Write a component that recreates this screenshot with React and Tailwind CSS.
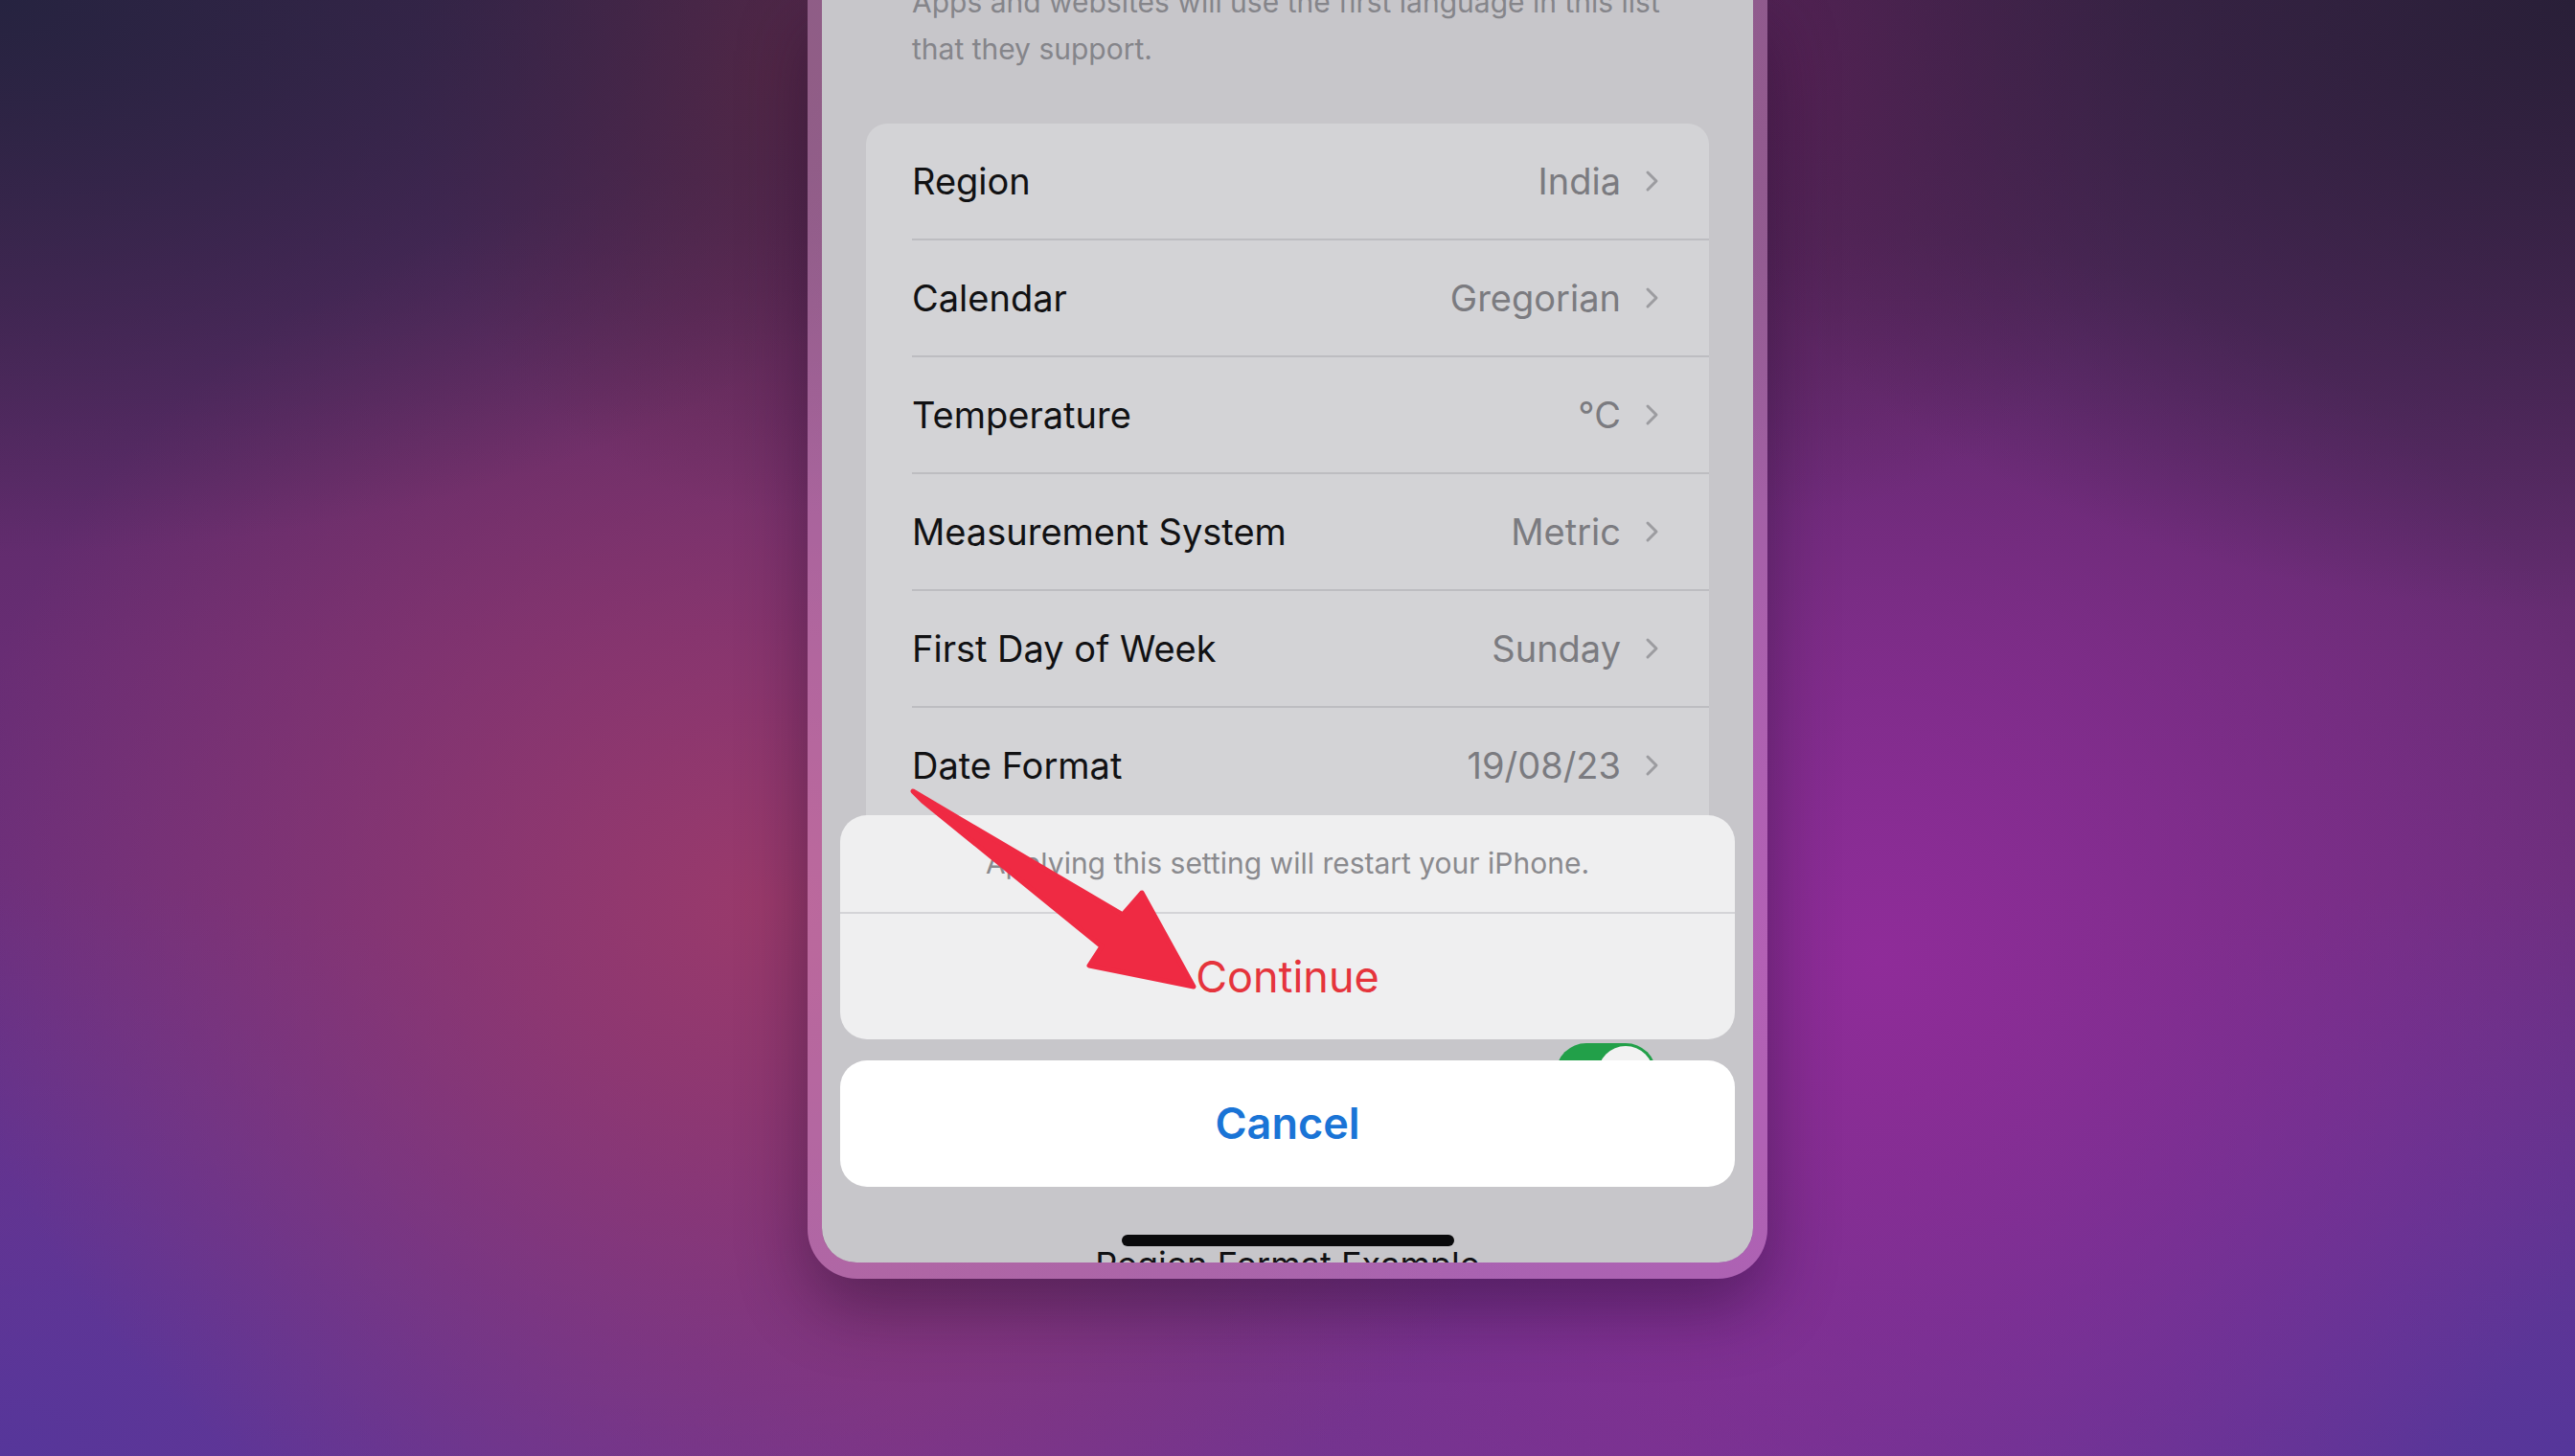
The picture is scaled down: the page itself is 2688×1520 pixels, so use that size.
import React from "react";

const rows = [
  ["Region", "India"],
  ["Calendar", "Gregorian"],
  ["Temperature", "°C"],
  ["Measurement System", "Metric"],
  ["First Day of Week", "Sunday"],
  ["Date Format", "19/08/23"],
  ["Number Format", "1,234,567.89"],
];

function Chevron() {
  return (
    <svg width="18" height="24" viewBox="0 0 18 24" className="shrink-0">
      <polyline
        points="4,3 13,12 4,21"
        fill="none"
        stroke="#9c9ca0"
        strokeWidth="3"
        strokeLinecap="round"
        strokeLinejoin="round"
      />
    </svg>
  );
}

export default function App() {
  return (
    <div
      className="relative h-[1520px] w-full overflow-hidden bg-[radial-gradient(ellipse_40%_38%_at_0%_0%,#262340_0%,rgba(38,35,64,0)_100%),radial-gradient(ellipse_36%_42%_at_100%_0%,#291f38_0%,rgba(41,31,56,0)_100%),radial-gradient(ellipse_14%_30%_at_30%_5%,#5e2848_0%,rgba(94,40,72,0)_100%),radial-gradient(ellipse_14%_30%_at_70%_5%,#5a2258_0%,rgba(90,34,88,0)_100%),radial-gradient(ellipse_32%_50%_at_30%_62%,#9a3a6b_0%,rgba(154,58,107,0)_100%),radial-gradient(ellipse_30%_50%_at_73%_66%,#8f2c99_0%,rgba(143,44,153,0)_100%),radial-gradient(ellipse_35%_40%_at_0%_100%,#56369a_0%,rgba(86,54,154,0)_100%),radial-gradient(ellipse_35%_40%_at_100%_100%,#55369a_0%,rgba(85,54,154,0)_100%),linear-gradient(180deg,#452650_0%,#682d74_45%,#74348f_100%)]"
      style={{ fontFamily: "Inter, 'Noto Sans', 'Liberation Sans', sans-serif" }}
    >
      <div className="flex h-full flex-col items-center">
        <div className="flex h-[1335px] w-[1002px] flex-col rounded-b-[52px] border-x-[15px] border-b-[17px] border-[rgba(240,175,230,0.4)] shadow-[0_30px_70px_rgba(35,10,45,0.45)]">
          <div className="relative flex flex-1 flex-col overflow-hidden rounded-b-[36px] bg-[#c7c6ca]">
            {/* caption */}
            <div className="mt-[-22px] px-[94px] text-[30px] leading-[49px] text-[#85858a]">
              Apps and websites will use the first language in this list
              <br />
              that they support.
            </div>

            {/* settings card */}
            <div className="mx-[46px] mt-[53px] rounded-t-[22px] bg-[#d3d3d6]">
              {rows.map(([label, value]) => (
                <div key={label} className="flex h-[122px] pl-[48px]">
                  <div className="flex flex-1 items-center justify-between border-b-2 border-[#bdbdc1] pr-[50px]">
                    <span className="text-[38px] text-[#111113]">{label}</span>
                    <span className="flex items-center gap-[24px] text-[38px] text-[#7b7b80]">
                      {value}
                      <Chevron />
                    </span>
                  </div>
                </div>
              ))}
            </div>

            {/* toggle peeking behind the sheet */}
            <div className="mt-[106px] flex justify-end pr-[101px]">
              <div className="flex h-[64px] w-[105px] items-center justify-end rounded-full bg-[#22a049] p-[3px]">
                <div className="h-[58px] w-[58px] rounded-full bg-[#f2f2f2]" />
              </div>
            </div>

            <div className="mt-[149px] text-center text-[36px] leading-none text-[#111113]">
              Region Format Example
            </div>

            {/* action sheet */}
            <div className="absolute inset-x-[19px] bottom-[79px] flex flex-col gap-[22px]">
              <div className="flex flex-col overflow-hidden rounded-[28px] bg-[#efeff0]">
                <div className="flex h-[103px] items-center justify-center border-b-2 border-[#d4d4d7] text-[30px] text-[#8a8a8e]">
                  Applying this setting will restart your iPhone.
                </div>
                <div className="flex h-[131px] items-center justify-center text-[45px] text-[#e5343c]">
                  Continue
                </div>
              </div>
              <div className="flex h-[132px] items-center justify-center rounded-[28px] bg-white text-[45px] font-semibold text-[#1a74d6]">
                Cancel
              </div>
            </div>

            {/* home indicator */}
            <div className="absolute bottom-[17px] left-[313px] h-[12px] w-[347px] rounded-full bg-[#0a0a0c]" />
          </div>
        </div>
      </div>

      {/* red annotation arrow */}
      <svg
        className="pointer-events-none absolute inset-0"
        width="2688"
        height="1520"
        viewBox="0 0 2688 1520"
      >
        <polygon
          points="953,826 963,836 1150,988 1137,1008 1246,1030 1192,932 1172,955"
          fill="#ef2a43"
          stroke="#ef2a43"
          strokeWidth="5"
          strokeLinejoin="round"
        />
      </svg>
    </div>
  );
}
